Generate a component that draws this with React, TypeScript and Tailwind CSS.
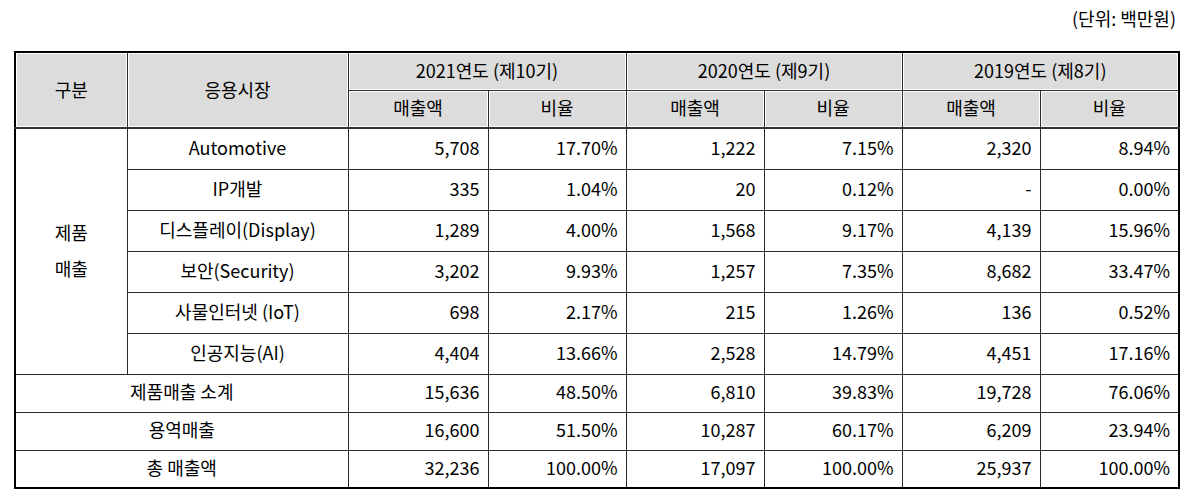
import React from 'react';

type Row = {
  market: string;
  values: string[];
};

const productRows: Row[] = [
  { market: 'Automotive', values: ['5,708', '17.70%', '1,222', '7.15%', '2,320', '8.94%'] },
  { market: 'IP개발', values: ['335', '1.04%', '20', '0.12%', '-', '0.00%'] },
  { market: '디스플레이(Display)', values: ['1,289', '4.00%', '1,568', '9.17%', '4,139', '15.96%'] },
  { market: '보안(Security)', values: ['3,202', '9.93%', '1,257', '7.35%', '8,682', '33.47%'] },
  { market: '사물인터넷 (IoT)', values: ['698', '2.17%', '215', '1.26%', '136', '0.52%'] },
  { market: '인공지능(AI)', values: ['4,404', '13.66%', '2,528', '14.79%', '4,451', '17.16%'] },
];

const summaryRows: Row[] = [
  { market: '제품매출 소계', values: ['15,636', '48.50%', '6,810', '39.83%', '19,728', '76.06%'] },
  { market: '용역매출', values: ['16,600', '51.50%', '10,287', '60.17%', '6,209', '23.94%'] },
  { market: '총 매출액', values: ['32,236', '100.00%', '17,097', '100.00%', '25,937', '100.00%'] },
];

const years = ['2021연도 (제10기)', '2020연도 (제9기)', '2019연도 (제8기)'];

const th = 'border border-[#2a2a2a] bg-[#dcdcdc] shadow-[inset_0_0_0_1px_#ffffff] font-normal text-center p-0 pb-[2px]';
const td = 'border border-[#2a2a2a] p-0 pb-[3px]';

export default function App() {
  return (
    <div className="w-[1200px] h-[499px] bg-white text-black text-[18px] font-['Noto_Sans_CJK_KR','Noto_Sans',sans-serif]">
      <div className="flex justify-end pr-[24px] pt-[8px] h-[51px]">
        <span className="leading-[20px]">(단위: 백만원)</span>
      </div>
      <table className="ml-[14px] border-collapse border-2 border-black table-fixed w-[1164px]">
        <colgroup>
          <col className="w-[112px]" />
          <col className="w-[221px]" />
          <col className="w-[140px]" />
          <col className="w-[138px]" />
          <col className="w-[138px]" />
          <col className="w-[138px]" />
          <col className="w-[138px]" />
          <col className="w-[139px]" />
        </colgroup>
        <thead>
          <tr className="h-[38px]">
            <th rowSpan={2} className={th}>구분</th>
            <th rowSpan={2} className={th}>응용시장</th>
            {years.map(y => (
              <th key={y} colSpan={2} className={th}>{y}</th>
            ))}
          </tr>
          <tr className="h-[38px] border-b-2 border-b-[#333]">
            {years.map(y => (
              <React.Fragment key={y}>
                <th className={th}>매출액</th>
                <th className={th}>비율</th>
              </React.Fragment>
            ))}
          </tr>
        </thead>
        <tbody>
          {productRows.map((r, i) => (
            <tr key={r.market} className="h-[41px]">
              {i === 0 && (
                <td rowSpan={6} className={`${td} text-center leading-[36px]`}>
                  제품<br />매출
                </td>
              )}
              <td className={`${td} text-center`}>{r.market}</td>
              {r.values.map((v, j) => (
                <td key={j} className={`${td} text-right pr-[8px]`}>{v}</td>
              ))}
            </tr>
          ))}
          {summaryRows.map(r => (
            <tr key={r.market} className="h-[38px]">
              <td colSpan={2} className={`${td} text-center`}>{r.market}</td>
              {r.values.map((v, j) => (
                <td key={j} className={`${td} text-right pr-[8px]`}>{v}</td>
              ))}
            </tr>
          ))}
        </tbody>
      </table>
    </div>
  );
}
